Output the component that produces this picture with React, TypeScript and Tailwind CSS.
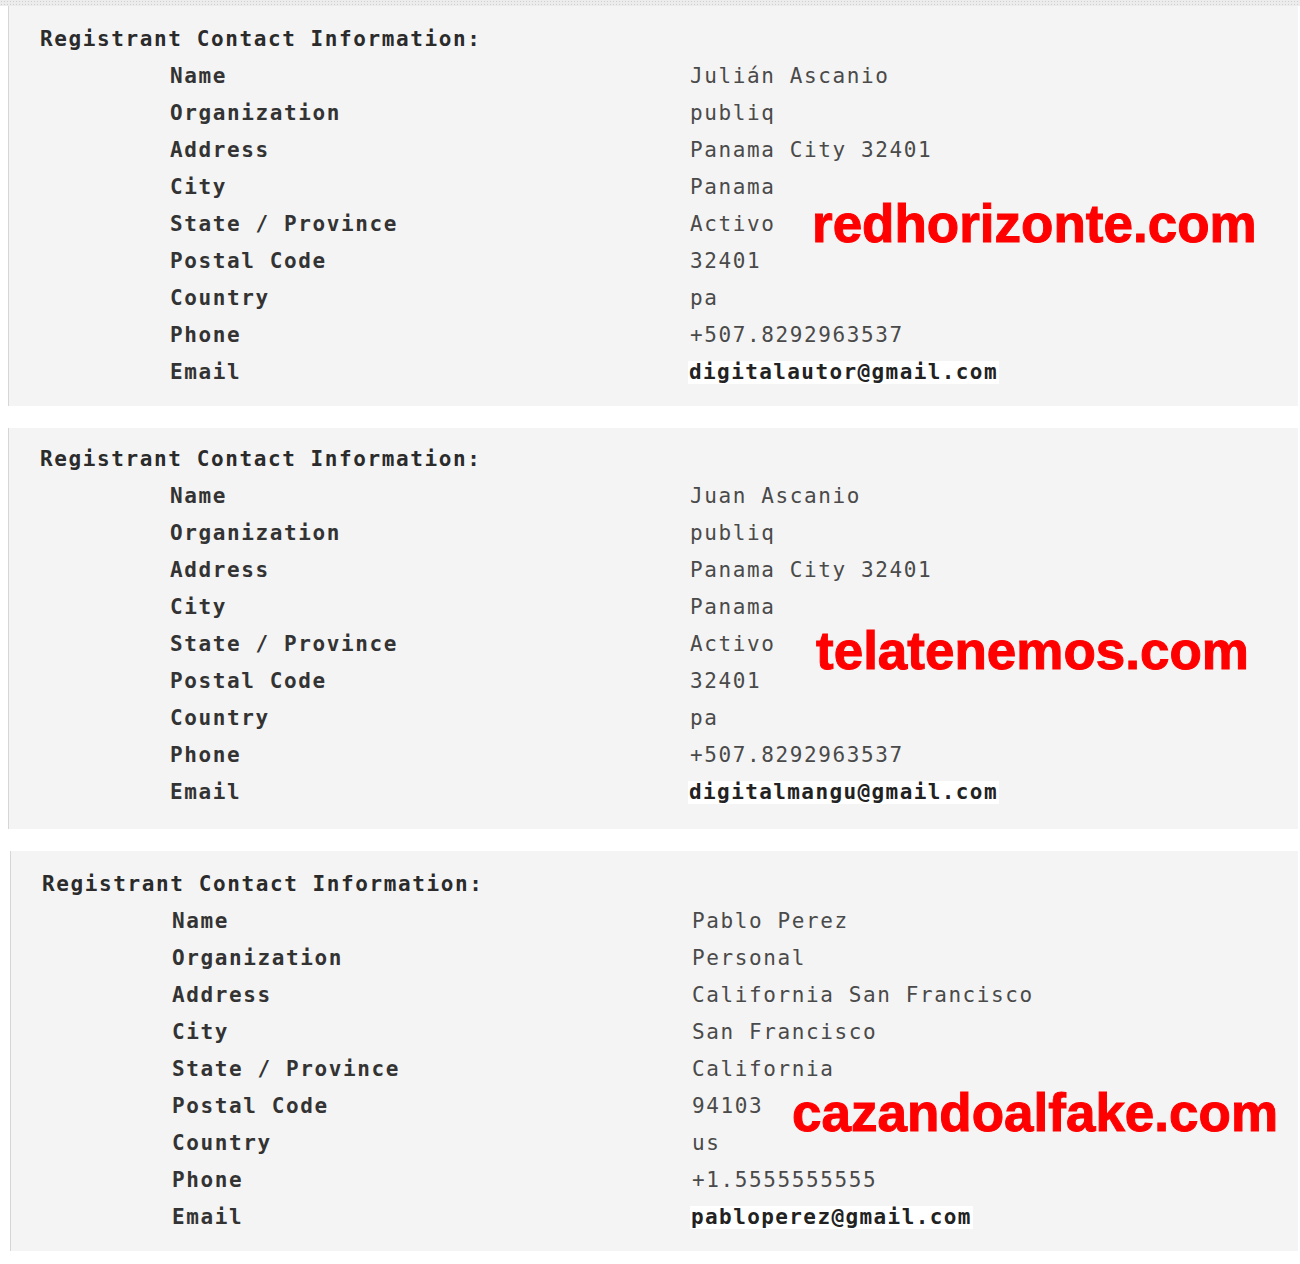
const mono = "font-['DejaVu_Sans_Mono','Liberation_Mono',monospace] text-[21px] tracking-[1.6px]";

type Row = [string, string];

interface Record {
  rows: Row[];
  email: string;
  site: string;
  siteClass: string;
  offset: string;
}

const records: Record[] = [
  {
    rows: [
      ["Name", "Julián Ascanio"],
      ["Organization", "publiq"],
      ["Address", "Panama City 32401"],
      ["City", "Panama"],
      ["State / Province", "Activo"],
      ["Postal Code", "32401"],
      ["Country", "pa"],
      ["Phone", "+507.8292963537"],
    ],
    email: "digitalautor@gmail.com",
    site: "redhorizonte.com",
    siteClass: "left-[803px] top-[191px]",
    offset: "ml-[8px] pt-[15px] pb-[15px]",
  },
  {
    rows: [
      ["Name", "Juan Ascanio"],
      ["Organization", "publiq"],
      ["Address", "Panama City 32401"],
      ["City", "Panama"],
      ["State / Province", "Activo"],
      ["Postal Code", "32401"],
      ["Country", "pa"],
      ["Phone", "+507.8292963537"],
    ],
    email: "digitalmangu@gmail.com",
    site: "telatenemos.com",
    siteClass: "left-[807px] top-[196px]",
    offset: "ml-[8px] pt-[13px] pb-[18px]",
  },
  {
    rows: [
      ["Name", "Pablo Perez"],
      ["Organization", "Personal"],
      ["Address", "California San Francisco"],
      ["City", "San Francisco"],
      ["State / Province", "California"],
      ["Postal Code", "94103"],
      ["Country", "us"],
      ["Phone", "+1.5555555555"],
    ],
    email: "pabloperez@gmail.com",
    site: "cazandoalfake.com",
    siteClass: "left-[781px] top-[235px]",
    offset: "ml-[10px] pt-[15px] pb-[15px]",
  },
];

function Panel({ rec }: { rec: Record }) {
  return (
    <div className={`relative mr-[2px] border-l border-[#d6d6d6] bg-[#f4f4f4] pl-[31px] ${rec.offset}`}>
      <div className={`${mono} flex h-[37px] items-center font-bold text-[#2b2b2b]`}>
        Registrant Contact Information:
      </div>
      {rec.rows.map(([label, value]) => (
        <div key={label} className={`${mono} flex h-[37px] items-center pl-[130px]`}>
          <div className="w-[520px] shrink-0 font-bold text-[#333333]">{label}</div>
          <div className="text-[#4a4a4a]">{value}</div>
        </div>
      ))}
      <div className={`${mono} flex h-[37px] items-center pl-[130px]`}>
        <div className="w-[518px] shrink-0 font-bold text-[#333333]">Email</div>
        <div className="bg-white px-[1px] leading-[23px] font-bold tracking-[1.4px] text-[#222222]">{rec.email}</div>
      </div>
      <div
        className={`absolute ${rec.siteClass} font-['Liberation_Sans',Arial,sans-serif] text-[53px] font-bold leading-none text-[#ff0000] [-webkit-text-stroke:1px_#ff0000]`}
      >
        {rec.site}
      </div>
    </div>
  );
}

export default function App() {
  return (
    <div className="flex min-h-[1264px] w-[1300px] flex-col bg-white">
      <div className="h-[6px] bg-[#ececec] bg-[radial-gradient(#cfcfcf_1px,transparent_1px)] bg-[length:3px_3px]" />
      <div className="flex flex-col gap-[22px]">
        {records.map((rec) => (
          <Panel key={rec.site} rec={rec} />
        ))}
      </div>
    </div>
  );
}
